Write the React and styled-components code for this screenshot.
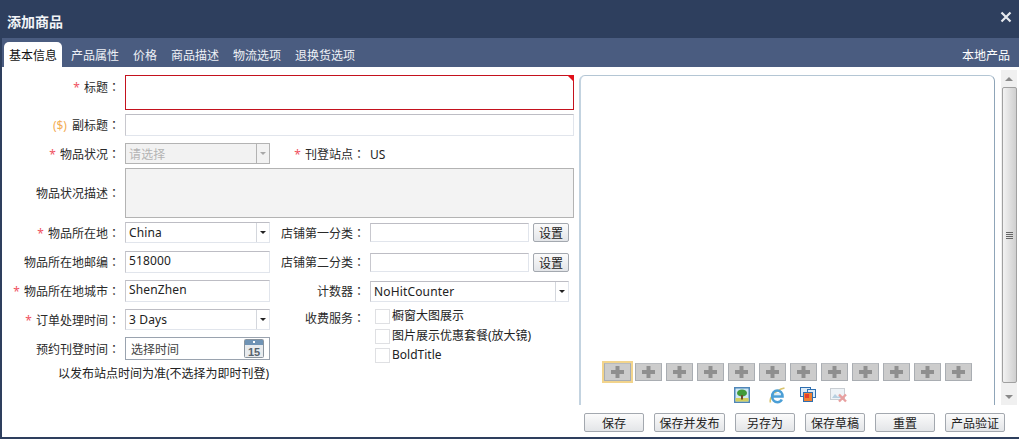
import React from 'react';
import styled, { createGlobalStyle } from 'styled-components';

const Global = createGlobalStyle`
  html, body { margin: 0; padding: 0; background: #2e3f5e; }
  * { box-sizing: border-box; }
`;

const Dialog = styled.div`
  width: 1019px; height: 439px;
  display: flex; flex-direction: column;
  background: #2e3f5e;
  font-family: "Noto Sans", "Noto Sans CJK SC", sans-serif;
  font-size: 12px; color: #222;
  overflow: hidden;
`;

const TitleBar = styled.div`
  height: 38px; flex: none;
  display: flex; align-items: flex-start; justify-content: space-between;
  padding: 11px 7px 0 7px;
  color: #f2f4f7; font-size: 14px; font-weight: 700; line-height: 22px;
`;

const CloseBtn = styled.svg`
  width: 12px; height: 12px; display: block;
`;

const TabBar = styled.div`
  height: 29px; flex: none;
  margin-left: 2px;
  padding: 4px 9px 0 2px;
  display: flex; align-items: flex-end;
  background: #4a5c80;
`;

const Tab = styled.div`
  height: 25px; padding: 0 5px;
  margin-right: 4px;
  display: flex; align-items: center;
  border-radius: 5px 5px 0 0;
  background: ${(p) => (p.$active ? '#fff' : 'transparent')};
  color: ${(p) => (p.$active ? '#111' : '#eef1f6')};
  white-space: nowrap;
`;

const TabRight = styled.div`
  margin-left: auto; height: 25px;
  display: flex; align-items: center;
  color: #fff;
`;

const Body = styled.div`
  flex: none; height: 346px;
  margin-left: 2px;
  background: #fff;
  display: flex;
`;

const Form = styled.div`
  width: 577px; flex: none;
  padding-top: 8px;
  display: flex; flex-direction: column;
`;

const Row = styled.div`
  display: flex; align-items: ${(p) => p.$align || 'center'};
  height: ${(p) => p.$h}px;
  margin-bottom: ${(p) => p.$mb || 0}px;
`;

const Label = styled.div`
  width: ${(p) => p.$w || 123}px; flex: none;
  padding-right: 5px;
  padding-top: ${(p) => p.$pt || 0}px;
  text-align: right; white-space: nowrap;
  color: #2a2a2a;
`;

const Colon = styled.span`
  font-family: "Noto Sans CJK TC", sans-serif;
`;

const Req = styled.span`
  color: #f0535f; margin-right: 4px;
`;

const Fee = styled.span`
  color: #f3ae55; margin-right: 5px;
`;

const TitleInput = styled.div`
  position: relative;
  width: 449px; height: 35px;
  border: 1px solid #c4121e;
  background: #fff;
  &::after {
    content: ''; position: absolute; right: -1px; top: -1px;
    border-top: 7px solid #e0101a;
    border-left: 7px solid transparent;
  }
`;

const Input = styled.div`
  width: ${(p) => p.$w}px; height: ${(p) => p.$h || 22}px;
  border: 1px solid #e1e5ec;
  border-top-color: #bdbdc4;
  border-left-color: #c8c8ce;
  background: #fff;
  padding: 0 0 3px 3px;
  display: flex; align-items: center;
  letter-spacing: 0.15px;
  flex: none;
`;

const GrayBox = styled.div`
  width: 449px; height: 50px;
  background: #f3f3f3;
  border: 1px solid #b3b3b3;
`;

const Select = styled.div`
  width: ${(p) => p.$w}px; height: 21px; flex: none;
  display: flex; align-items: stretch;
  background: ${(p) => (p.$disabled ? '#f2f2f2' : '#fff')};
  color: ${(p) => (p.$disabled ? '#b4b4b4' : '#222')};
  border: 1px solid ${(p) => (p.$disabled ? '#b3b3b3' : '#e1e5ec')};
  ${(p) => !p.$disabled && 'border-top-color: #bdbdc4; border-left-color: #c8c8ce;'}
  letter-spacing: 0.15px;
`;

const SelectText = styled.div`
  flex: 1; padding-left: 3px; display: flex; align-items: center;
`;

const SelectArrow = styled.div`
  width: 13px; flex: none;
  border-left: 1px solid ${(p) => (p.$disabled ? '#b3b3b3' : '#d4d7dd')};
  display: flex; align-items: center; justify-content: center;
  &::after {
    content: ''; display: block;
    border-top: 3px solid ${(p) => (p.$disabled ? '#a8a8a8' : '#222')};
    border-left: 3px solid transparent;
    border-right: 3px solid transparent;
  }
`;

const Value = styled.div`
  color: #222; padding-top: 1px;
`;

const LowerBlock = styled.div`
  display: flex;
`;

const LowerLeft = styled.div`
  display: flex; flex-direction: column;
`;

const DateInput = styled.div`
  width: 145px; height: 23px; flex: none;
  border: 1px solid #9aa3af;
  padding: 0 5px 0 5px;
  display: flex; align-items: center; justify-content: space-between;
  color: #444;
`;

const Note = styled.div`
  margin-top: 4px;
  padding-left: 56px; white-space: nowrap; color: #222;
`;

const SmallBtn = styled.button`
  width: 36px; height: 19px; flex: none;
  margin-left: 4px; padding: 0;
  border: 1px solid #a3a8af; border-radius: 2px;
  background: linear-gradient(#fbfbfb, #e3e5e8);
  font: inherit; color: #222;
`;

const Check = styled.div`
  display: flex; align-items: flex-start; gap: 2px;
  height: 19.5px; white-space: nowrap; line-height: 14px;
  &::before {
    content: ''; width: 13px; height: 13px; display: block; flex: none;
    border: 1px solid #dfe0e3; background: #fff;
  }
`;

const CheckList = styled.div`
  padding-left: 5px; display: flex; flex-direction: column;
`;

const Side = styled.div`
  flex: 1; min-width: 0;
  display: flex;
`;

const Panel = styled.div`
  width: 416px; height: 330px; margin-top: 8px; flex: none;
  border: 1px solid #8fa5b8;
  border-bottom: none;
  border-left: 2px solid #c3d3e0;
  border-top-color: #b4c6d4;
  border-radius: 6px 6px 0 0;
  display: flex; flex-direction: column; justify-content: flex-end; align-items: center;
`;

const ThumbRow = styled.div`
  display: flex; gap: 4px;
`;

const Thumb = styled.div`
  width: 27px; height: 18px;
  background: #cccccc;
  border: 1px solid #a9adb2;
  border-top-color: #b8bbbf;
  display: flex; align-items: center; justify-content: center;
  outline: ${(p) => (p.$active ? '2px solid #f2d48c' : 'none')};
`;

const ToolRow = styled.div`
  display: flex; gap: 14px; margin-top: 6px; height: 18px; align-items: flex-start;
  padding-left: 6px;
`;

const ToolGap = styled.span`
  margin-left: 5px; display: flex;
`;

const Scrollbar = styled.div`
  width: 16px; height: 335px; margin: 3px 0 0 6px; flex: none;
  background: #f0f0f0;
  display: flex; flex-direction: column; align-items: center;
`;

const ScrollArrow = styled.div`
  height: 17px; width: 100%; flex: none;
  display: flex; align-items: center; justify-content: center;
  &::after {
    content: ''; display: block;
    border-left: 4px solid transparent; border-right: 4px solid transparent;
    ${(p) => (p.$up ? 'border-bottom' : 'border-top')}: 4px solid #8a8a8a;
  }
`;

const ScrollThumb = styled.div`
  flex: 1; width: 15px; margin-bottom: 5px;
  border: 1px solid #a0a0a0; border-radius: 2px;
  background: linear-gradient(90deg, #f2f2f2, #cfcfcf);
  display: flex; align-items: center; justify-content: center;
`;

const Grip = styled.div`
  width: 7px; height: 7px;
  background: repeating-linear-gradient(#666 0 1px, transparent 1px 2px);
`;

const Footer = styled.div`
  flex: 1; margin-left: 2px;
  background: #fff;
  display: flex; justify-content: flex-end; align-items: flex-start; gap: 10px;
  padding: 0 14px 0 0;
`;

const ActionBtn = styled.button`
  width: ${(p) => p.$w}px; height: 19px; padding: 0;
  border: 1px solid #a3a8af; border-radius: 2px;
  background: linear-gradient(#fbfbfb, #e3e5e8);
  font: inherit; color: #222;
  white-space: nowrap;
`;

const Bottom = styled.div`
  height: 2px; flex: none; background: #2e3f5e;
`;

const CalendarIcon = () => (
  <svg width="20" height="19" viewBox="0 0 20 19">
    <rect x="0.5" y="0.5" width="19" height="18" rx="1" fill="#e8ebee" stroke="#8a949e" />
    <rect x="1" y="1" width="18" height="5" fill="#6f93b5" />
    <rect x="9" y="2" width="2" height="2" fill="#fff" />
    <text x="10" y="16.5" textAnchor="middle" fontSize="11" fontWeight="700" fontFamily="Liberation Sans, sans-serif" fill="#56626c">15</text>
  </svg>
);

const PlusIcon = () => (
  <svg width="13" height="12" viewBox="0 0 13 12">
    <path d="M4.5 0h4v4H13v4H8.5v4h-4V8H0V4h4.5z" fill="#8f8f8f" />
  </svg>
);

const TreeIcon = () => (
  <svg width="16" height="16" viewBox="0 0 16 16">
    <rect x="0.75" y="0.75" width="14.5" height="14.5" fill="#cfe8f6" stroke="#4f86b8" strokeWidth="1.5" />
    <rect x="1.5" y="11" width="13" height="3.5" fill="#d2cf5e" />
    <ellipse cx="8" cy="6" rx="5" ry="3.6" fill="#3f9a3a" />
    <rect x="7" y="8" width="2" height="4.5" fill="#6d4a2c" />
  </svg>
);

const IeIcon = () => (
  <svg width="17" height="17" viewBox="0 0 17 17">
    <path d="M1.5 15.5C0 12 5 3.5 15.5 1" fill="none" stroke="#d9c46e" strokeWidth="1.6" />
    <path d="M3.5 9.5h10c0-3.5-2.4-6-5.2-6S3.2 6 3.2 9.5s2.4 5.7 5.2 5.7c2 0 3.6-1 4.4-2.7" fill="none" stroke="#4b9fd6" strokeWidth="2.6" />
    <path d="M5 7h7" stroke="#cfe6f6" strokeWidth="1.4" />
  </svg>
);

const CopyIcon = () => (
  <svg width="16" height="16" viewBox="0 0 16 16">
    <rect x="0.5" y="0.5" width="10" height="9" fill="#dcebf7" stroke="#2f6fb0" />
    <rect x="7.5" y="2.5" width="8" height="8" fill="#dcebf7" stroke="#2f6fb0" />
    <rect x="3.5" y="5.5" width="9" height="9" fill="#f08030" stroke="#2f6fb0" />
    <rect x="5" y="7" width="4" height="4" fill="#e63c2a" />
  </svg>
);

const DeleteImgIcon = () => (
  <svg width="18" height="16" viewBox="0 0 18 16">
    <rect x="0.5" y="1.5" width="14" height="11" fill="#eef3f7" stroke="#c9ced3" />
    <path d="M2 11l3-4 3 3 2-2 3 3z" fill="#b7cfe0" />
    <path d="M9 7.5l7 7M16 7.5l-7 7" stroke="#e8a0a0" strokeWidth="2.4" />
  </svg>
);

const tabs = ['产品属性', '价格', '商品描述', '物流选项', '退换货选项'];
const actions = [
  ['保存', 60], ['保存并发布', 71], ['另存为', 60],
  ['保存草稿', 60], ['重置', 60], ['产品验证', 60],
];

const Field = ({ w, pt, star, fee, children }) => (
  <Label $w={w} $pt={pt}>
    {star && <Req>*</Req>}
    {fee && <Fee>($)</Fee>}
    {children}<Colon>：</Colon>
  </Label>
);

export default function App() {
  return (
    <Dialog>
      <Global />
      <TitleBar>
        <span>添加商品</span>
        <CloseBtn viewBox="0 0 12 12">
          <path d="M1.5 1.5l9 9M10.5 1.5l-9 9" stroke="#e6e9ee" strokeWidth="2.2" />
        </CloseBtn>
      </TitleBar>
      <TabBar>
        <Tab $active>基本信息</Tab>
        {tabs.map((t) => <Tab key={t}>{t}</Tab>)}
        <TabRight>本地产品</TabRight>
      </TabBar>
      <Body>
        <Form>
          <Row $h={35} $mb={4} $align="flex-start">
            <Field star pt={3}>标题</Field>
            <TitleInput />
          </Row>
          <Row $h={22} $mb={7}>
            <Field fee>副标题</Field>
            <Input $w={449} />
          </Row>
          <Row $h={21} $mb={4}>
            <Field star>物品状况</Field>
            <Select $w={145} $disabled>
              <SelectText>请选择</SelectText>
              <SelectArrow $disabled />
            </Select>
            <Field w={100} star>刊登站点</Field>
            <Value>US</Value>
          </Row>
          <Row $h={50} $mb={4}>
            <Field>物品状况描述</Field>
            <GrayBox />
          </Row>
          <Row $h={21} $mb={8}>
            <Field star>物品所在地</Field>
            <Select $w={145}>
              <SelectText>China</SelectText>
              <SelectArrow />
            </Select>
            <Field w={100}>店铺第一分类</Field>
            <Input $w={159} $h={19} />
            <SmallBtn>设置</SmallBtn>
          </Row>
          <Row $h={22} $mb={7}>
            <Field>物品所在地邮编</Field>
            <Input $w={145}>518000</Input>
            <Field w={100}>店铺第二分类</Field>
            <Input $w={159} $h={19} />
            <SmallBtn>设置</SmallBtn>
          </Row>
          <Row $h={22} $mb={7}>
            <Field star>物品所在地城市</Field>
            <Input $w={145}>ShenZhen</Input>
            <Field w={100}>计数器</Field>
            <Select $w={199}>
              <SelectText>NoHitCounter</SelectText>
              <SelectArrow />
            </Select>
          </Row>
          <LowerBlock>
            <LowerLeft>
              <Row $h={21} $mb={7}>
                <Field star>订单处理时间</Field>
                <Select $w={145}>
                  <SelectText>3 Days</SelectText>
                  <SelectArrow />
                </Select>
              </Row>
              <Row $h={23}>
                <Field>预约刊登时间</Field>
                <DateInput>
                  <span>选择时间</span>
                  <CalendarIcon />
                </DateInput>
              </Row>
              <Note>以发布站点时间为准(不选择为即时刊登)</Note>
            </LowerLeft>
            <Field w={100}>收费服务</Field>
            <CheckList>
              <Check>橱窗大图展示</Check>
              <Check>图片展示优惠套餐(放大镜)</Check>
              <Check>BoldTitle</Check>
            </CheckList>
          </LowerBlock>
        </Form>
        <Side>
          <Panel>
            <ThumbRow>
              {Array.from({ length: 12 }).map((_, i) => (
                <Thumb key={i} $active={i === 0}><PlusIcon /></Thumb>
              ))}
            </ThumbRow>
            <ToolRow>
              <TreeIcon />
              <ToolGap><IeIcon /></ToolGap>
              <CopyIcon />
              <DeleteImgIcon />
            </ToolRow>
          </Panel>
          <Scrollbar>
            <ScrollArrow $up />
            <ScrollThumb><Grip /></ScrollThumb>
            <ScrollArrow />
          </Scrollbar>
        </Side>
      </Body>
      <Footer>
        {actions.map(([t, w]) => <ActionBtn key={t} $w={w}>{t}</ActionBtn>)}
      </Footer>
      <Bottom />
    </Dialog>
  );
}
